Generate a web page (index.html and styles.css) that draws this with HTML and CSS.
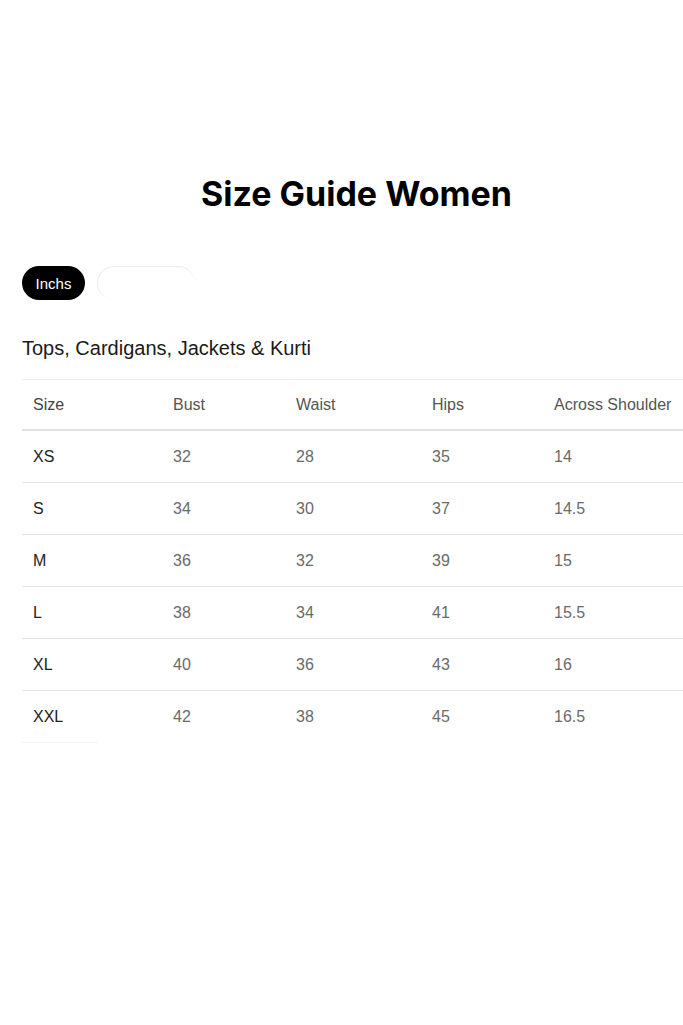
FILE: index.html
```html
<!DOCTYPE html>
<html>
<head>
<meta charset="utf-8">
<link rel="stylesheet" href="styles.css">
</head>
<body>
<main class="page">
  <h1 class="title">Size Guide Women</h1>
  <div class="toggle">
    <span class="pill pill-active">Inchs</span>
    <span class="pill pill-blank"></span>
  </div>
  <h2 class="subtitle">Tops, Cardigans, Jackets &amp; Kurti</h2>
  <div class="table">
    <div class="row head">
      <div class="cell first">Size</div><div class="cell">Bust</div><div class="cell">Waist</div><div class="cell">Hips</div><div class="cell">Across Shoulder</div>
    </div>
    <div class="row">
      <div class="cell first">XS</div><div class="cell">32</div><div class="cell">28</div><div class="cell">35</div><div class="cell">14</div>
    </div>
    <div class="row">
      <div class="cell first">S</div><div class="cell">34</div><div class="cell">30</div><div class="cell">37</div><div class="cell">14.5</div>
    </div>
    <div class="row">
      <div class="cell first">M</div><div class="cell">36</div><div class="cell">32</div><div class="cell">39</div><div class="cell">15</div>
    </div>
    <div class="row">
      <div class="cell first">L</div><div class="cell">38</div><div class="cell">34</div><div class="cell">41</div><div class="cell">15.5</div>
    </div>
    <div class="row">
      <div class="cell first">XL</div><div class="cell">40</div><div class="cell">36</div><div class="cell">43</div><div class="cell">16</div>
    </div>
    <div class="row last">
      <div class="cell first">XXL</div><div class="cell">42</div><div class="cell">38</div><div class="cell">45</div><div class="cell">16.5</div>
    </div>
    <div class="tail"></div>
  </div>
</main>
</body>
</html>
```
FILE: styles.css
```css
html, body {
  margin: 0;
  padding: 0;
  background: #ffffff;
}
.page {
  width: 683px;
  height: 1025px;
  overflow: hidden;
  padding-top: 172px;
  box-sizing: border-box;
  font-family: "Liberation Sans", Arial, sans-serif;
}
.title {
  margin: 0 0 0 30px;
  text-align: center;
  font-family: Inter, "Open Sans", sans-serif;
  font-weight: 700;
  font-size: 34px;
  line-height: 44px;
  color: #000;
}
.toggle {
  display: flex;
  gap: 12px;
  margin: 50px 0 0 22px;
}
.pill {
  height: 34px;
  border-radius: 17px;
  box-sizing: border-box;
}
.pill-active {
  width: 63px;
  background: #000;
  color: #fff;
  font-size: 15px;
  display: flex;
  align-items: center;
  justify-content: center;
}
.pill-blank {
  width: 98px;
  background: #fff;
  border-top: 1px solid #ececec;
  border-left: 1px solid #ececec;
}
.subtitle {
  margin: 36px 0 0 22px;
  font-weight: 400;
  font-size: 20px;
  line-height: 24px;
  color: #1a1a1a;
}
.table {
  margin: 19px 0 0 22px;
  width: 680px;
  border-top: 1px solid #eeeeee;
}
.row {
  display: grid;
  grid-template-columns: 140px 123px 136px 122px 159px;
  height: 51px;
  align-items: center;
  border-bottom: 1px solid #e4e4e4;
  font-size: 16px;
}
.row.head {
  height: 49px;
  border-bottom: 2px solid #e2e2e2;
}
.row.last {
  border-bottom: none;
}
.tail {
  width: 75px;
  height: 1px;
  background: #f1f1f1;
}
.cell {
  padding-left: 11px;
  color: #6a6a6a;
  white-space: nowrap;
}
.head .cell {
  color: #555;
}
.cell.first {
  color: #222;
}
.head .cell.first {
  color: #444;
}
```
